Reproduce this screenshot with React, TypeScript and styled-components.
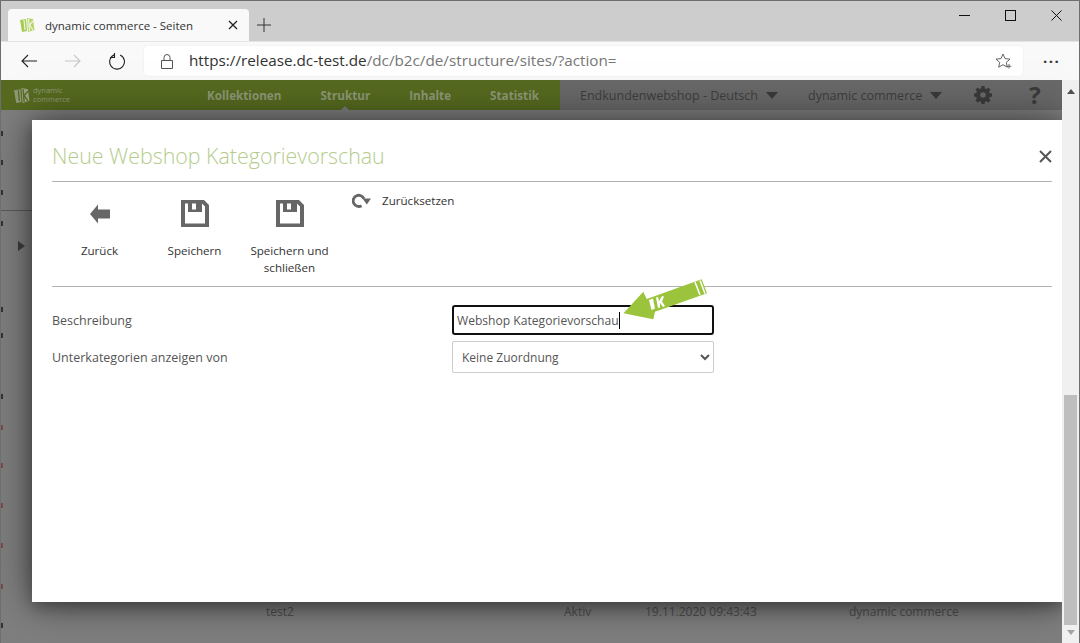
import React from 'react'
import styled, { createGlobalStyle } from 'styled-components'

const GlobalStyle = createGlobalStyle`
  html, body { margin: 0; padding: 0; height: 100%; overflow: hidden; }
  #root { height: 100%; }
  * { box-sizing: border-box; }
`

const ui = `"Open Sans", "Noto Sans", sans-serif`
const site = `"Open Sans", "Liberation Sans", sans-serif`

const Win = styled.div`
  width: 1080px;
  height: 643px;
  display: flex;
  flex-direction: column;
  border: 1px solid #6e6e6e;
  border-bottom: 0;
  font-family: ${ui};
  overflow: hidden;
`
const TabStrip = styled.div`
  height: 40px;
  flex: none;
  background: #cdcdcd;
  display: flex;
  align-items: flex-end;
  padding-left: 7px;
`
const Tab = styled.div`
  width: 241px;
  height: 32px;
  background: #f9f9f9;
  border-radius: 4px 4px 0 0;
  display: flex;
  align-items: center;
  padding: 0 11px 0 11px;
  font-size: 11.5px;
  color: #333;
  gap: 10px;
`
const TabTitle = styled.span`
  flex: 1;
  white-space: nowrap;
`
const NewTab = styled.div`
  width: 26px;
  height: 26px;
  margin: 0 0 3px 2px;
  display: flex;
  align-items: center;
  justify-content: center;
`
const WinButtons = styled.div`
  margin-left: auto;
  align-self: flex-start;
  display: flex;
`
const WinButton = styled.div`
  width: 46px;
  height: 28px;
  display: flex;
  align-items: center;
  justify-content: center;
`
const Toolbar = styled.div`
  height: 39px;
  flex: none;
  background: #f9f9f9;
  border-top: 1px solid #e4e4e4;
  display: flex;
  align-items: center;
  padding-left: 6px;
`
const NavButton = styled.div`
  width: 44px;
  height: 30px;
  display: flex;
  align-items: center;
  justify-content: center;
`
const AddressBar = styled.div`
  width: 879px;
  height: 30px;
  margin-left: 5px;
  background: #fff;
  border-radius: 4px;
  display: flex;
  align-items: center;
  padding: 0 11px 0 17px;
  font-size: 15.25px;
  color: #777;
  box-shadow: 0 0 2px rgba(0, 0, 0, 0.08);
`
const Url = styled.span`
  margin: -2px 0 0 16px;
  flex: 1;
  white-space: nowrap;
`
const UrlHost = styled.span`
  color: #333;
`
const More = styled.div`
  margin-left: 20px;
  font-size: 15px;
  font-weight: 700;
  letter-spacing: 1.5px;
  color: #333;
  line-height: 1;
  margin-top: -8px;
`

const Viewport = styled.div`
  flex: 1;
  position: relative;
  display: flex;
  min-height: 0;
`
const Page = styled.div`
  flex: 1;
  display: flex;
  flex-direction: column;
  background: #7f7f7f;
`
const SiteHeader = styled.header`
  height: 30px;
  flex: none;
  display: flex;
  background: #696969;
  font-family: ${site};
  font-size: 12px;
  position: relative;
  z-index: 1;
`
const GreenBar = styled.div`
  width: 559px;
  flex: none;
  background: #566b1f;
  display: flex;
  align-items: center;
  padding-left: 12px;
`
const Brand = styled.div`
  display: flex;
  flex: none;
  align-items: center;
  gap: 3px;
  width: 194px;
  color: #8e9a77;
  font-size: 7.5px;
  line-height: 9px;
`
const NavItem = styled.span<{ $active?: boolean }>`
  color: #8e9a77;
  font-size: 11.7px;
  font-weight: 700;
  margin-right: 39px;
  white-space: nowrap;
  position: relative;
  &:last-child { margin-right: 0; }
  ${p => p.$active && `
    &::after {
      content: '';
      position: absolute;
      left: 50%;
      bottom: -7px;
      margin-left: -4px;
      border: 4px solid transparent;
      border-top: 0;
      border-bottom-color: #7d7d7d;
    }
  `}
`
const HeaderRight = styled.div`
  flex: 1;
  display: flex;
  align-items: center;
  padding-left: 20px;
  color: #3e3e3e;
  font-size: 12.5px;
`
const Picker = styled.div`
  display: flex;
  align-items: center;
  gap: 8px;
  margin-right: 30px;
  white-space: nowrap;
`
const Caret = styled.span`
  border: 6px solid transparent;
  border-top: 7px solid #3a3a3a;
  border-bottom: 0;
`
const Gear = styled.svg`
  margin-left: 2px;
`
const Help = styled.span`
  margin-left: 37px;
  font-size: 24px;
  font-weight: 700;
  line-height: 1;
  color: #3a3a3a;
`
const PageBody = styled.div`
  flex: 1;
  position: relative;
  display: flex;
  background: #7f7f7f;
`
const EdgeMarks = styled.div`
  width: 2px;
  flex: none;
  display: flex;
  flex-direction: column;
`
const Mark = styled.i<{ $red?: boolean; $gap: number }>`
  display: block;
  height: 5px;
  margin-top: ${p => p.$gap}px;
  background: ${p => (p.$red ? '#7c4a4d' : '#333')};
`
const RowLine = styled.div`
  position: absolute;
  left: 0;
  top: 100px;
  width: 40px;
  height: 1px;
  background: #5a5a5a;
`
const Expander = styled.div`
  position: absolute;
  left: 17px;
  top: 131px;
  border: 5.5px solid transparent;
  border-left: 7px solid #3d3d3d;
  border-right: 0;
`
const BehindRow = styled.div`
  position: absolute;
  left: 265px;
  top: 493px;
  display: flex;
  font-family: ${site};
  font-size: 12px;
  color: #4e4e4e;
  white-space: nowrap;
`
const BehindCell = styled.span<{ $w: number }>`
  width: ${p => p.$w}px;
`

const Modal = styled.section`
  position: absolute;
  left: 31px;
  top: 40px;
  width: 1030px;
  height: 482px;
  background: #fff;
  box-shadow: 0 5px 15px rgba(0, 0, 0, 0.3), 0 0 40px rgba(0, 0, 0, 0.5);
  padding: 0 10px 0 20px;
  font-family: ${site};
  z-index: 2;
`
const ModalHead = styled.div`
  height: 62px;
  border-bottom: 1px solid #b3b3b3;
  display: flex;
  align-items: center;
  justify-content: space-between;
  padding: 9px 0 0;
`
const ModalTitle = styled.h1`
  margin: 0;
  font-size: 21.4px;
  font-weight: 300;
  color: #b4cc8c;
`
const Close = styled.div`
  display: flex;
  margin-top: 2px;
`
const ActionBar = styled.div`
  height: 105px;
  border-bottom: 1px solid #b3b3b3;
  display: flex;
  align-items: flex-start;
  color: #333;
  font-size: 11.6px;
  line-height: 17px;
`
const BigAction = styled.div`
  width: 95px;
  padding-top: 18px;
  display: flex;
  flex-direction: column;
  align-items: center;
  text-align: center;
`
const IconSlot = styled.div`
  height: 27px;
  margin-bottom: 15px;
  display: flex;
  align-items: center;
`
const SmallAction = styled.div`
  display: flex;
  align-items: center;
  gap: 11px;
  margin: 10px 0 0 15px;
`
const FormRow = styled.div<{ $h: number; $gap: number }>`
  display: flex;
  align-items: center;
  height: ${p => p.$h}px;
  margin-top: ${p => p.$gap}px;
  font-size: 12.5px;
  color: #555;
`
const Label = styled.label`
  width: 400px;
`
const TextField = styled.div`
  width: 262px;
  height: 30px;
  border: 2px solid #111;
  border-radius: 3px;
  padding-left: 3px;
  display: flex;
  align-items: center;
  font-size: 12.1px;
  color: #555;
`
const CaretBar = styled.i`
  width: 1px;
  height: 17px;
  background: #000;
`
const SelectField = styled.select`
  width: 262px;
  height: 32px;
  border: 1px solid #ccc;
  border-radius: 2px;
  background: #fff;
  padding-left: 5px;
  font-family: ${site};
  font-size: 12px;
  color: #555;
`
const Crayon = styled.svg`
  position: absolute;
  left: 591px;
  top: 159px;
`

const Scrollbar = styled.div`
  width: 17px;
  flex: none;
  background: #f0f0f0;
  display: flex;
  flex-direction: column;
  align-items: center;
  padding: 0 2px;
  z-index: 3;
`
const ScrollUp = styled.i`
  margin-top: 9px;
  border: 4px solid transparent;
  border-top: 0;
  border-bottom: 5px solid #505050;
`
const ScrollThumb = styled.div`
  width: 13px;
  height: 230px;
  margin-top: 301px;
  background: #bebebe;
`
const ScrollDown = styled.i`
  margin-top: 5px;
  border: 4px solid transparent;
  border-bottom: 0;
  border-top: 5px solid #a3a3a3;
`

const Logo = ({ size, a, b, c }: { size: number; a: string; b: string; c: string }) => (
  <svg width={size} height={size} viewBox="0 0 16 16">
    <path d="M1 3l6-1 1 12-5 1z" fill={a} />
    <path d="M8 1l6 1 1.500 11L9 15z" fill={b} />
    <path d="M5 3l1 10M9.500 2l1 12M14 4l-3.500 4 3.500 5" fill="none" stroke={c} strokeWidth="1.200" />
  </svg>
)

const Floppy = () => (
  <svg width="28" height="27" viewBox="0 0 28 27">
    <path
      fillRule="evenodd"
      fill="#666"
      d="M0 0h23l5 5v22H0zM4 3.500v20h20V6.500l-3-3v8.500H7V3.500zM11 3.500h4v6h-4z"
    />
  </svg>
)

const marks = [
  { gap: 21 }, { gap: 24 }, { gap: 25 }, { gap: 26 }, { gap: 81 }, { gap: 21 }, { gap: 56 },
  { gap: 26, red: true }, { gap: 33, red: true }, { gap: 35, red: true }, { gap: 35, red: true },
  { gap: 36, red: true }, { gap: 34 },
]

const App = () => (
  <Win>
    <GlobalStyle />
    <TabStrip>
      <Tab>
        <Logo size={16} a="#a5cc55" b="#b5d56b" c="#eef5dc" />
        <TabTitle>dynamic commerce - Seiten</TabTitle>
        <svg width="10" height="10" viewBox="0 0 10 10">
          <path d="M1 1l8 8M9 1 1 9" stroke="#222" strokeWidth="1.3" />
        </svg>
      </Tab>
      <NewTab>
        <svg width="14" height="14" viewBox="0 0 14 14">
          <path d="M7 0v14M0 7h14" stroke="#333" strokeWidth="1" />
        </svg>
      </NewTab>
      <WinButtons>
        <WinButton>
          <svg width="11" height="11" viewBox="0 0 11 11"><path d="M0 5.500h11" stroke="#111" /></svg>
        </WinButton>
        <WinButton>
          <svg width="11" height="11" viewBox="0 0 11 11"><rect x=".5" y=".5" width="10" height="10" fill="none" stroke="#111" /></svg>
        </WinButton>
        <WinButton>
          <svg width="11" height="11" viewBox="0 0 11 11"><path d="M.5.500l10 10M10.500.500l-10 10" stroke="#111" /></svg>
        </WinButton>
      </WinButtons>
    </TabStrip>
    <Toolbar>
      <NavButton>
        <svg width="16" height="14" viewBox="0 0 16 14">
          <path d="M16 7H1M7 1 1 7l6 6" fill="none" stroke="#222" strokeWidth="1.1" />
        </svg>
      </NavButton>
      <NavButton>
        <svg width="16" height="14" viewBox="0 0 16 14">
          <path d="M0 7h15M9 1l6 6-6 6" fill="none" stroke="#c8c8c8" strokeWidth="1.1" />
        </svg>
      </NavButton>
      <NavButton>
        <svg width="17" height="17" viewBox="0 0 17 17">
          <path d="M6 1.600A7.400 7.400 0 1 0 11.200 2M5.500 0v4.500H1" fill="none" stroke="#222" strokeWidth="1.1" />
        </svg>
      </NavButton>
      <AddressBar>
        <svg width="12" height="15" viewBox="0 0 12 15">
          <path d="M.5 6.500h11v8H.5zM3 6.500V3.500a3 3 0 0 1 6 0v3" fill="none" stroke="#555" />
        </svg>
        <Url>
          <UrlHost>https://release.dc-test.de</UrlHost>/dc/b2c/de/structure/sites/?action=
        </Url>
        <svg width="17" height="16" viewBox="0 0 17 16">
          <path d="M8 1l2 4.600 5 .5-3.700 3.300 1 4.800L8 11.700l-4.300 2.500 1-4.800L1 6.100l5-.5z" fill="none" stroke="#666" />
          <path d="M14 11v4.500M11.700 13.300h4.600" stroke="#666" />
        </svg>
      </AddressBar>
      <More>...</More>
    </Toolbar>
    <Viewport>
      <Page>
        <SiteHeader>
          <GreenBar>
            <Brand>
              <Logo size={17} a="#8e9a77" b="#98a383" c="#566b1f" />
              <span>dynamic<br />commerce</span>
            </Brand>
            <NavItem>Kollektionen</NavItem>
            <NavItem $active>Struktur</NavItem>
            <NavItem>Inhalte</NavItem>
            <NavItem>Statistik</NavItem>
          </GreenBar>
          <HeaderRight>
            <Picker>Endkundenwebshop - Deutsch <Caret /></Picker>
            <Picker>dynamic commerce <Caret /></Picker>
            <Gear width="18" height="18" viewBox="0 0 18 18">
              <path fillRule="evenodd" fill="#3a3a3a" d="M7.500 0h3l.4 2.400 1.500.6 2-1.400 2.100 2.100-1.400 2 .6 1.500 2.300.4v3l-2.300.4-.6 1.500 1.400 2-2.100 2.100-2-1.400-1.500.6-.4 2.200h-3l-.4-2.200-1.500-.6-2 1.400-2.100-2.100 1.400-2-.6-1.500L0 10.500v-3l2.300-.4.600-1.500-1.400-2 2.100-2.100 2 1.400 1.500-.6zM9 6.200a2.800 2.800 0 1 0 0 5.600 2.800 2.800 0 0 0 0-5.600z" />
            </Gear>
            <Help>?</Help>
          </HeaderRight>
        </SiteHeader>
        <PageBody>
          <EdgeMarks>
            {marks.map((m, i) => <Mark key={i} $gap={m.gap} $red={m.red} />)}
          </EdgeMarks>
          <RowLine />
          <Expander />
          <BehindRow>
            <BehindCell $w={298}>test2</BehindCell>
            <BehindCell $w={81}>Aktiv</BehindCell>
            <BehindCell $w={204}>19.11.2020 09:43:43</BehindCell>
            <span>dynamic commerce</span>
          </BehindRow>
        </PageBody>
      </Page>
      <Scrollbar>
        <ScrollUp />
        <ScrollThumb />
        <ScrollDown />
      </Scrollbar>
      <Modal>
        <ModalHead>
          <ModalTitle>Neue Webshop Kategorievorschau</ModalTitle>
          <Close>
            <svg width="13" height="13" viewBox="0 0 13 13">
              <path d="M1 1l11 11M12 1 1 12" stroke="#555" strokeWidth="2" />
            </svg>
          </Close>
        </ModalHead>
        <ActionBar>
          <BigAction>
            <IconSlot>
              <svg width="20" height="20" viewBox="0 0 20 20">
                <path d="M0 10 8 .5V5.500h12v9H8v5z" fill="#666" />
              </svg>
            </IconSlot>
            Zurück
          </BigAction>
          <BigAction>
            <IconSlot><Floppy /></IconSlot>
            Speichern
          </BigAction>
          <BigAction>
            <IconSlot><Floppy /></IconSlot>
            Speichern und schließen
          </BigAction>
          <SmallAction>
            <svg width="19" height="15" viewBox="0 0 19 15">
              <path d="M9.500 12.800A5.600 5.600 0 1 1 12 5.800" fill="none" stroke="#666" strokeWidth="2.800" />
              <path d="M10.500 5.500h8.500l-4.200 6z" fill="#666" />
            </svg>
            Zurücksetzen
          </SmallAction>
        </ActionBar>
        <FormRow $h={30} $gap={18}>
          <Label>Beschreibung</Label>
          <TextField>Webshop Kategorievorschau<CaretBar /></TextField>
        </FormRow>
        <FormRow $h={32} $gap={6}>
          <Label>Unterkategorien anzeigen von</Label>
          <SelectField defaultValue="none">
            <option value="none">Keine Zuordnung</option>
          </SelectField>
        </FormRow>
        <Crayon width="90" height="42" viewBox="0 0 90 42">
          <path d="M.5 34.300 20.300 12.700 23.700 20 78.700.3 84 14.300 32 32.700l-1.700 7.600z" fill="#9bc43c" />
          <path d="M72 3l5 13M77 1.500l5 13" stroke="#fff" strokeWidth="1.500" />
          <path d="M26 21l4-1.500 2 10-3.500 1.500zM33 18.500l2-.5 1 4 3-5 2 .5-2 5 3 4.500-2 1-3-4v4.500l-2 .5z" fill="#fff" />
        </Crayon>
      </Modal>
    </Viewport>
  </Win>
)

export default App
